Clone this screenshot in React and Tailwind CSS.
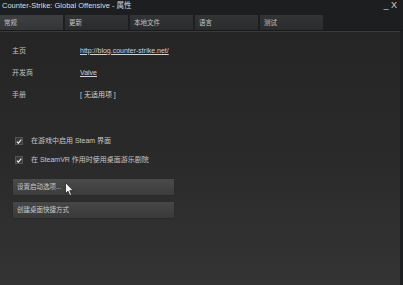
const tabs = ["常规", "更新", "本地文件", "语言", "测试"];

const infoRows = [
  { label: "主页", value: "http://blog.counter-strike.net/", link: true },
  { label: "开发商", value: "Valve", link: true },
  { label: "手册", value: "[ 无适用项 ]", link: false },
];

const options = ["在游戏中启用 Steam 界面", "在 SteamVR 作用时使用桌面游乐剧院"];

const Check = () => (
  <div className="w-[8px] h-[8px] bg-[#3a3a3a] border border-[#555] flex items-center justify-center">
    <svg width="7" height="7" viewBox="0 0 10 10">
      <path d="M1.5 5.2 L4 7.8 L8.8 2" stroke="#f2f2f2" strokeWidth="2" fill="none" />
    </svg>
  </div>
);

const Cursor = () => (
  <svg className="absolute left-[52px] top-[3px]" width="10" height="15" viewBox="0 0 10 15">
    <path d="M0.5 0.5 L0.5 11.5 L3 9.2 L4.8 13.5 L6.5 12.8 L4.8 8.6 L8.2 8.6 Z" fill="#f4f4f4" stroke="#222" strokeWidth="0.8" />
  </svg>
);

const App = () => {
  return (
    <div className="w-[403px] h-[285px] bg-[#1d1e20] flex flex-col overflow-hidden" style={{ fontFamily: '"Liberation Sans", "Noto Sans CJK SC", sans-serif' }}>
      {/* Title bar */}
      <div className="h-[14px] flex items-start justify-between px-[2px] pt-[1px]">
        <span className="text-[7.5px] leading-[9px] text-[#dcdcdc]">Counter-Strike: Global Offensive - 属性</span>
        <span className="text-[9px] leading-[9px] text-[#cfcfcf] pr-[4px]">_ X</span>
      </div>

      {/* Tabs */}
      <div className="flex gap-[2px] h-[15px] mt-[1px]">
        {tabs.map((t, i) => (
          <div
            key={t}
            className={`w-[63px] h-[15px] pl-[4px] flex items-center text-[6.5px] text-[#c4c4c4] ${
              i === 0 ? "bg-gradient-to-b from-[#3e3f40] to-[#343536]" : "bg-gradient-to-b from-[#323334] to-[#2b2c2d]"
            }`}
          >
            {t}
          </div>
        ))}
      </div>
      <div className="h-[1px] bg-[#19191a]" />
      <div className="h-[1px] bg-[#3a3a3b] mr-[3px]" />

      {/* Content */}
      <div className="flex-1 mr-[3px] bg-gradient-to-b from-[#252526] via-[#2a2a2a] to-[#343434] pl-[12px] pt-[15px]">
        <div className="flex flex-col gap-[14px]">
          {infoRows.map((r) => (
            <div key={r.label} className="flex items-center h-[8px]">
              <span className="w-[68px] text-[7px] text-[#c0c0c0]">{r.label}</span>
              <span className={`text-[7px] text-[#d2d2d2] ${r.link ? "underline decoration-[#d2d2d2]" : ""}`}>{r.value}</span>
            </div>
          ))}
        </div>

        <div className="flex flex-col gap-[11px] mt-[38px] pl-[3px]">
          {options.map((o) => (
            <div key={o} className="flex items-center gap-[8px] h-[8px]">
              <Check />
              <span className="text-[7px] text-[#c6c6c6]">{o}</span>
            </div>
          ))}
        </div>

        <div className="flex flex-col gap-[5px] mt-[14px] w-[163px]">
          <div className="relative h-[18px] bg-gradient-to-b from-[#4b4b4b] to-[#3c3c3c] border border-[#2a2a2a] flex items-center pl-[4px] text-[6.5px] text-[#c8c8c8]">
            设置启动选项...
            <Cursor />
          </div>
          <div className="h-[18px] bg-gradient-to-b from-[#474747] to-[#393939] border border-[#2a2a2a] flex items-center pl-[4px] text-[6.5px] text-[#c8c8c8]">
            创建桌面快捷方式
          </div>
        </div>
      </div>
    </div>
  );
};

export default App;
